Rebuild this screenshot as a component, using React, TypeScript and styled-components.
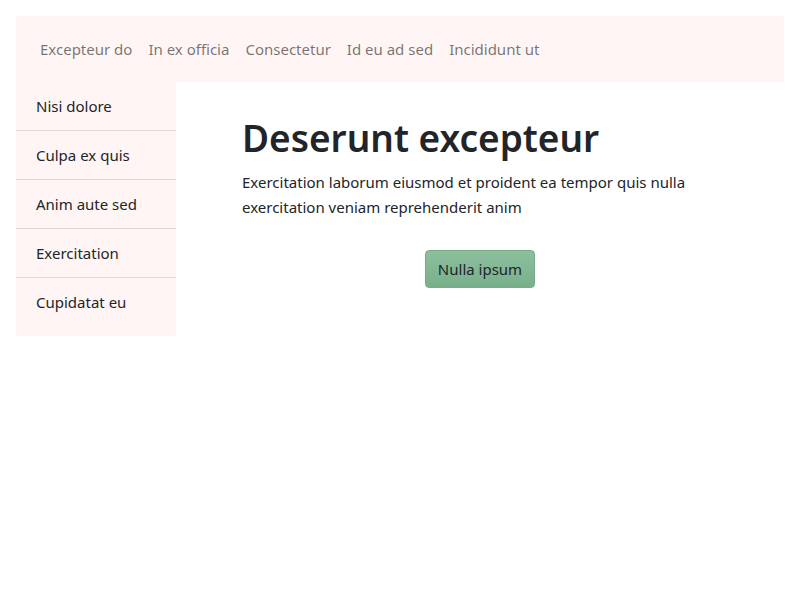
import React from "react";
import styled, { createGlobalStyle } from "styled-components";

const Global = createGlobalStyle`
  html, body { margin: 0; padding: 0; background: #fff; }
  body {
    font-family: "Noto Sans", "Liberation Sans", sans-serif;
    font-size: 16px;
    line-height: 1.5;
    color: #212529;
  }
  * { box-sizing: border-box; }
`;

const Page = styled.div`
  padding: 16px;
`;

const NavBar = styled.nav`
  display: flex;
  align-items: center;
  gap: 16px;
  height: 66px;
  padding: 0 24px;
  background: #fff5f4;
`;

const NavLink = styled.a`
  font-size: 15px;
  color: rgba(0, 0, 0, 0.55);
  text-decoration: none;
`;

const Body = styled.div`
  display: flex;
  align-items: flex-start;
`;

const Sidebar = styled.ul`
  list-style: none;
  margin: 0;
  padding: 0 0 9px;
  width: 160px;
  flex-shrink: 0;
  background: #fff5f4;
`;

const SideItem = styled.li`
  height: 49px;
  display: flex;
  align-items: center;
  padding: 0 20px;
  font-size: 15px;
  color: #212529;
  border-bottom: 1px solid #dfd6d6;
  &:last-child { border-bottom: none; }
`;

const Main = styled.main`
  flex: 1;
  display: flex;
  flex-direction: column;
  align-items: center;
  padding: 32px 66px;
`;

const Content = styled.div`
  width: 100%;
`;

const Title = styled.h1`
  margin: 0 0 8px;
  font-size: 37px;
  font-weight: 600;
  line-height: 48px;
  color: #212529;
`;

const Lead = styled.p`
  margin: 0 0 30px;
  font-size: 15px;
  line-height: 25px;
`;

const ButtonRow = styled.div`
  display: flex;
  justify-content: center;
`;

const Button = styled.button`
  font-family: inherit;
  font-size: 15px;
  line-height: 24px;
  padding: 6px 12px;
  border: 1px solid #76ad88;
  border-radius: 4px;
  color: #212529;
  background: linear-gradient(to bottom, #8dbf9e, #78b08b);
`;

const navItems = ["Excepteur do", "In ex officia", "Consectetur", "Id eu ad sed", "Incididunt ut"];
const sideItems = ["Nisi dolore", "Culpa ex quis", "Anim aute sed", "Exercitation", "Cupidatat eu"];

export default function App() {
  return (
    <Page>
      <Global />
      <NavBar>
        {navItems.map((n) => (
          <NavLink key={n} href="#">{n}</NavLink>
        ))}
      </NavBar>
      <Body>
        <Sidebar>
          {sideItems.map((s) => (
            <SideItem key={s}>{s}</SideItem>
          ))}
        </Sidebar>
        <Main>
          <Content>
            <Title>Deserunt excepteur</Title>
            <Lead>
              Exercitation laborum eiusmod et proident ea tempor quis nulla exercitation veniam reprehenderit anim
            </Lead>
            <ButtonRow>
              <Button>Nulla ipsum</Button>
            </ButtonRow>
          </Content>
        </Main>
      </Body>
    </Page>
  );
}
